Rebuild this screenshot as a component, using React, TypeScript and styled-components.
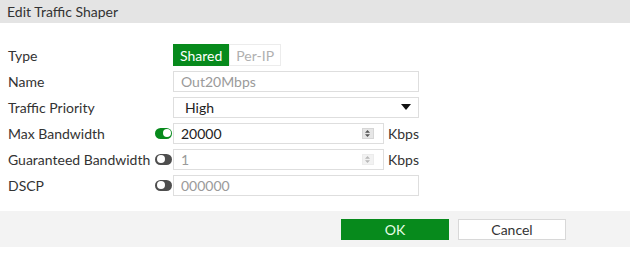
import React, { FC } from 'react';
import styled, { createGlobalStyle } from 'styled-components';

const GlobalStyle = createGlobalStyle`
  html, body {
    margin: 0;
    padding: 0;
    background: #ffffff;
  }
  body {
    font-family: Lato, 'Open Sans', sans-serif;
    font-size: 14px;
    color: #333333;
  }
`;

const green = '#078a1c';

const Dialog = styled.div`
  width: 630px;
  height: 259px;
  display: flex;
  flex-direction: column;
  background: #ffffff;
`;

const Header = styled.div`
  height: 23px;
  display: flex;
  align-items: center;
  padding-left: 7px;
  background: #e4e4e4;
  font-size: 14px;
  color: #333;
`;

const Form = styled.div`
  display: grid;
  grid-template-columns: 147px 18px 246px;
  grid-auto-rows: 22px;
  row-gap: 4px;
  padding: 21px 0 0 8px;
  align-items: center;
`;

const Label = styled.div`
  font-size: 14px;
  color: #333;
  white-space: nowrap;
  grid-column: 1;
`;

const ToggleCell = styled.div`
  grid-column: 2;
  display: flex;
  align-items: center;
`;

const Toggle = styled.span<{ $on?: boolean }>`
  position: relative;
  width: 17px;
  height: 11px;
  border-radius: 6px;
  background: ${p => (p.$on ? green : '#4e4e4e')};
  &::after {
    content: '';
    position: absolute;
    top: 1.5px;
    ${p => (p.$on ? 'right: 1.5px;' : 'left: 1.5px;')}
    width: 8px;
    height: 8px;
    border-radius: 50%;
    background: #fff;
  }
`;

const Control = styled.div`
  grid-column: 3;
  display: flex;
  align-items: center;
  height: 22px;
`;

const Segment = styled.div`
  display: flex;
  height: 22px;
`;

const SegButton = styled.span<{ $active?: boolean }>`
  display: flex;
  align-items: center;
  justify-content: center;
  padding: 0 6px;
  font-size: 14px;
  border: 1px solid ${p => (p.$active ? green : '#ececec')};
  background: ${p => (p.$active ? green : '#fff')};
  color: ${p => (p.$active ? '#fff' : '#b0b0b0')};
  box-sizing: border-box;
`;

const Field = styled.div<{ $width?: number; $muted?: boolean; $pad?: number }>`
  box-sizing: border-box;
  width: ${p => p.$width ?? 246}px;
  height: 21px;
  border: 1px solid #dedede;
  background: #fff;
  display: flex;
  align-items: center;
  justify-content: space-between;
  padding: 0 9px 0 ${p => p.$pad ?? 7}px;
  font-size: 14px;
  color: ${p => (p.$muted ? '#9a9a9a' : '#222')};
`;

const Unit = styled.span`
  margin-left: 4px;
  font-size: 14px;
  color: #333;
`;

const Spinner = styled.span<{ $dim?: boolean }>`
  width: 10px;
  height: 9px;
  background: ${p => (p.$dim ? '#f2f2f2' : '#e6e6e6')};
  border: 1px solid ${p => (p.$dim ? '#ececec' : '#d6d6d6')};
  display: flex;
  align-items: center;
  justify-content: center;
`;

const Footer = styled.div`
  margin-top: 15px;
  height: 36px;
  background: #f3f3f3;
  display: flex;
  align-items: center;
  justify-content: flex-end;
  gap: 9px;
  padding-right: 64px;
`;

const Button = styled.button<{ $primary?: boolean }>`
  width: 108px;
  height: 21px;
  box-sizing: border-box;
  font-family: Lato, 'Open Sans', sans-serif;
  font-size: 14px;
  border: 1px solid ${p => (p.$primary ? green : '#d8d8d8')};
  background: ${p => (p.$primary ? green : '#fff')};
  color: ${p => (p.$primary ? '#e8ffe8' : '#333')};
  padding: 0;
`;

const SpinIcon: FC<{ dim?: boolean }> = ({ dim }) => (
  <Spinner $dim={dim}>
    <svg width="5" height="7" viewBox="0 0 5 7">
      <path d="M2.5 0L5 2.8H0Z M2.5 7L0 4.2H5Z" fill={dim ? '#b8b8b8' : '#555'} />
    </svg>
  </Spinner>
);

const Caret: FC = () => (
  <svg width="10" height="6" viewBox="0 0 10 6">
    <path d="M0 0H10L5 6Z" fill="#111" />
  </svg>
);

export default function App() {
  return (
    <>
      <GlobalStyle />
      <Dialog>
        <Header>Edit Traffic Shaper</Header>
        <Form>
          <Label>Type</Label>
          <Control>
            <Segment>
              <SegButton $active>Shared</SegButton>
              <SegButton>Per-IP</SegButton>
            </Segment>
          </Control>

          <Label>Name</Label>
          <Control>
            <Field $muted>Out20Mbps</Field>
          </Control>

          <Label>Traffic Priority</Label>
          <Control>
            <Field $pad={11} style={{ paddingRight: 7 }}>
              High
              <Caret />
            </Field>
          </Control>

          <Label>Max Bandwidth</Label>
          <ToggleCell>
            <Toggle $on />
          </ToggleCell>
          <Control>
            <Field $width={216}>
              20000
              <SpinIcon />
            </Field>
            <Unit>Kbps</Unit>
          </Control>

          <Label>Guaranteed Bandwidth</Label>
          <ToggleCell>
            <Toggle />
          </ToggleCell>
          <Control>
            <Field $width={216} $muted>
              1
              <SpinIcon dim />
            </Field>
            <Unit>Kbps</Unit>
          </Control>

          <Label>DSCP</Label>
          <ToggleCell>
            <Toggle />
          </ToggleCell>
          <Control>
            <Field $muted>000000</Field>
          </Control>
        </Form>
        <Footer>
          <Button $primary>OK</Button>
          <Button>Cancel</Button>
        </Footer>
      </Dialog>
    </>
  );
}
